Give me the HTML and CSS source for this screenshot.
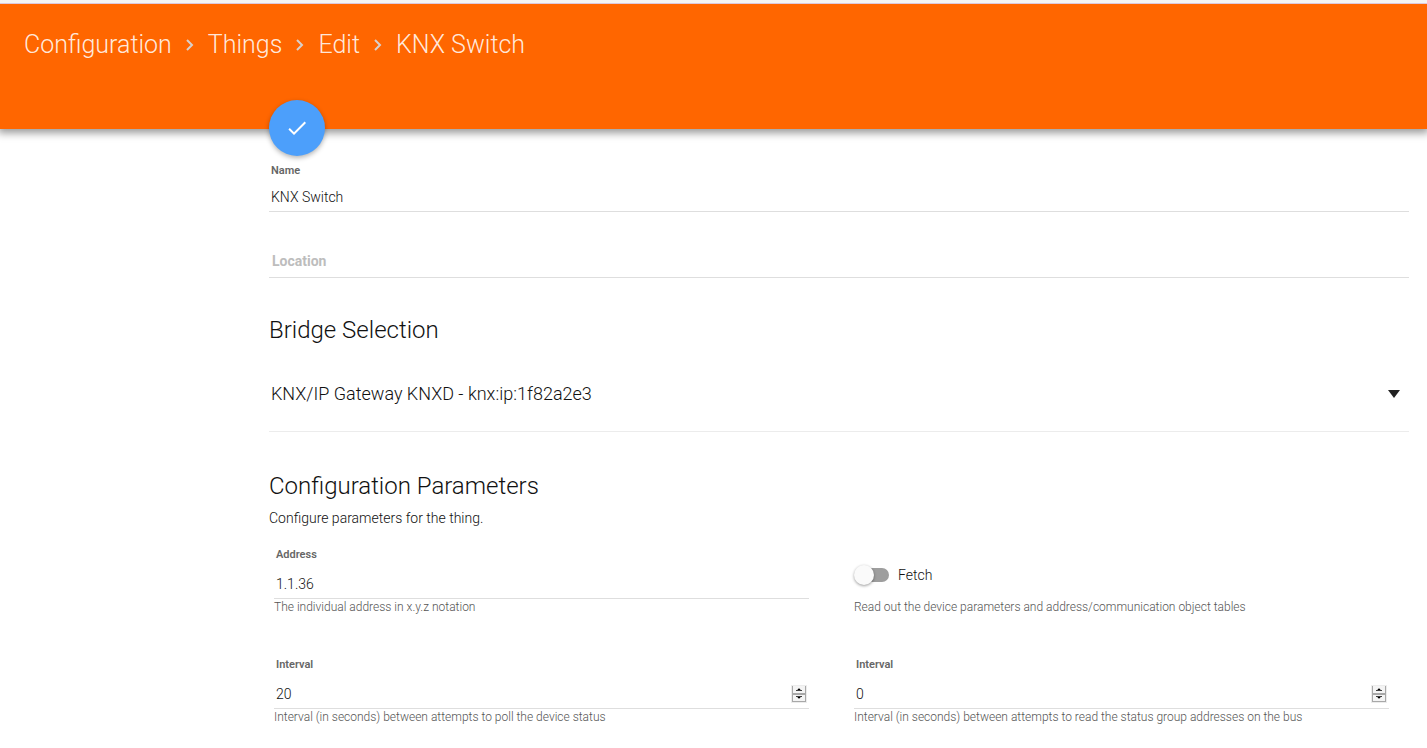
FILE: index.html
```
<!DOCTYPE html>
<html lang="en">
<head>
    <meta charset="UTF-8">
    <meta name="viewport" content="width=device-width, initial-scale=1.0">
    <title>Configuration - Things - Edit</title>
    <link rel="stylesheet" href="styles.css">
</head>
<body>
    <header class="toolbar">
        <nav class="breadcrumb">
            <a href="#configuration">Configuration</a>
            <svg viewBox="0 0 8 12"><path d="M1 1l5 5-5 5"/></svg>
            <a href="#things">Things</a>
            <svg viewBox="0 0 8 12"><path d="M1 1l5 5-5 5"/></svg>
            <a href="#edit">Edit</a>
            <svg viewBox="0 0 8 12"><path d="M1 1l5 5-5 5"/></svg>
            <a href="#knx-switch">KNX Switch</a>
        </nav>
        <button class="fab" type="submit" form="thing-form" aria-label="Save">
            <svg viewBox="0 0 24 24"><path d="M9 16.17L4.83 12l-1.42 1.41L9 19 21 7l-1.41-1.41z"/></svg>
        </button>
    </header>

    <form class="content" id="thing-form">
        <div class="field">
            <label for="name">Name</label>
            <input type="text" id="name" value="KNX Switch">
        </div>
        <div class="field field-empty">
            <input type="text" id="location" placeholder="Location" aria-label="Location">
        </div>

        <h2>Bridge Selection</h2>
        <div class="select-wrap">
            <select aria-label="Bridge Selection">
                <option>KNX/IP Gateway KNXD - knx:ip:1f82a2e3</option>
            </select>
            <span class="caret"></span>
        </div>

        <h2>Configuration Parameters</h2>
        <p class="intro">Configure parameters for the thing.</p>

        <div class="params">
            <div class="field param">
                <label for="address">Address</label>
                <input type="text" id="address" value="1.1.36">
                <p class="hint">The individual address in x.y.z notation</p>
            </div>
            <div class="param">
                <label class="switch">
                    <input type="checkbox">
                    <span>Fetch</span>
                </label>
                <p class="hint">Read out the device parameters and address/communication object tables</p>
            </div>
            <div class="field param">
                <label for="poll">Interval</label>
                <div class="number">
                    <input type="number" id="poll" value="20">
                    <div class="spinner">
                        <button type="button" aria-label="Increase"><svg viewBox="0 0 7 3"><path d="M3 0h1v1h1v1h2v1H0V2h2V1h1z"/></svg></button>
                        <button type="button" aria-label="Decrease"><svg viewBox="0 0 7 3"><path d="M0 0h7v1H5v1H4v1H3V2H2V1H0z"/></svg></button>
                    </div>
                </div>
                <p class="hint">Interval (in seconds) between attempts to poll the device status</p>
            </div>
            <div class="field param">
                <label for="read">Interval</label>
                <div class="number">
                    <input type="number" id="read" value="0">
                    <div class="spinner">
                        <button type="button" aria-label="Increase"><svg viewBox="0 0 7 3"><path d="M3 0h1v1h1v1h2v1H0V2h2V1h1z"/></svg></button>
                        <button type="button" aria-label="Decrease"><svg viewBox="0 0 7 3"><path d="M0 0h7v1H5v1H4v1H3V2H2V1H0z"/></svg></button>
                    </div>
                </div>
                <p class="hint">Interval (in seconds) between attempts to read the status group addresses on the bus</p>
            </div>
        </div>
    </form>
</body>
</html>
```
FILE: styles.css
```
* { box-sizing: border-box; }

body {
    margin: 0;
    background-color: #fff;
    border-top: 3px solid #f4f4f4;
    color: #111;
    font-family: Roboto, "Liberation Sans", sans-serif;
    font-size: 14px;
    font-weight: 300;
}

h2, p { margin: 0; }

input, select, button {
    font: inherit;
    color: inherit;
}

/* Toolbar */
.toolbar {
    position: relative;
    height: 126px;
    padding: 25px 24px 0;
    background-color: #ff6600;
    border-top: 1px solid #dcc8dc;
    box-shadow: 0 2px 8px 2px rgba(0, 0, 0, 0.4);
}

.breadcrumb {
    display: flex;
    align-items: center;
    line-height: 32px;
    font-size: 25px;
}

.breadcrumb a {
    color: rgba(255, 255, 255, 0.87);
    text-decoration: none;
}

.breadcrumb svg {
    width: 8px;
    height: 12px;
    margin: 0 14px;
    fill: none;
    stroke: #d8d0cc;
    stroke-width: 2;
}

.fab {
    position: absolute;
    left: 269px;
    bottom: -27px;
    width: 56px;
    height: 56px;
    padding: 16px;
    border: 0;
    border-radius: 50%;
    background-color: #4c9ffb;
    box-shadow: 0 2px 5px rgba(0, 0, 0, 0.3);
    cursor: pointer;
}

.fab svg {
    display: block;
    width: 24px;
    height: 24px;
    fill: #fff;
}

/* Form */
.content {
    margin: 0 18px 0 269px;
    padding-top: 34px;
}

.field > label {
    display: block;
    padding-left: 2px;
    color: #666;
    font-size: 11px;
    font-weight: 600;
    line-height: 16px;
}

.field input {
    display: block;
    width: 100%;
    height: 33px;
    padding: 4px 2px 0;
    border: 0;
    border-bottom: 1px solid #dedede;
    border-radius: 0;
    background: none;
    outline: 0;
}

.field-empty { margin-top: 33px; }
.field-empty input { padding: 0 3px; }

.field-empty input::placeholder {
    color: #bdbdbd;
    font-weight: 700;
    opacity: 1;
}

h2 {
    margin-top: 36px;
    font-size: 24px;
    font-weight: 300;
    line-height: 32px;
}

.select-wrap {
    position: relative;
    margin: 10px 0 38px;
}

.select-wrap select {
    display: block;
    width: 100%;
    height: 76px;
    padding: 0 2px;
    border: 0;
    border-bottom: 1px solid #ececec;
    border-radius: 0;
    background: none;
    font-size: 18px;
    appearance: none;
}

.caret {
    position: absolute;
    top: 34px;
    right: 9px;
    border: 6px solid transparent;
    border-top: 8px solid #212121;
    border-bottom: 0;
    pointer-events: none;
}

.intro {
    margin-top: 6px;
    line-height: 20px;
}

/* Parameters */
.params {
    display: grid;
    grid-template-columns: 1fr 1fr;
    gap: 42px 45px;
    margin-top: 19px;
    padding: 0 20px 20px 5px;
}

.param input {
    height: 36px;
    padding-top: 7px;
}

.hint {
    color: #555;
    font-size: 12px;
    line-height: 16px;
}

.number { position: relative; }
.number input { appearance: textfield; }

.number input::-webkit-inner-spin-button { appearance: none; }

.spinner {
    position: absolute;
    right: 2px;
    bottom: 6px;
    display: flex;
    flex-direction: column;
    width: 16px;
    height: 18px;
    border: 1px solid #ececec;
}

.spinner button {
    display: flex;
    flex: 1;
    align-items: center;
    justify-content: center;
    min-height: 0;
    padding: 0;
    border: 1px solid #a8a8a8;
    border-top: 0;
    background-color: #f4f4f4;
}

.spinner button:first-child { border-bottom-width: 2px; }

.spinner svg {
    width: 6px;
    height: 3px;
    fill: #000;
}

.switch {
    display: flex;
    align-items: center;
    gap: 9px;
    height: 52px;
    padding-top: 3px;
}

.switch input {
    position: relative;
    width: 34px;
    height: 14px;
    margin: 1px 0 0 1px;
    padding: 0;
    border-radius: 7px;
    background-color: #9e9e9e;
    appearance: none;
}

.switch input::before {
    content: "";
    position: absolute;
    top: -3px;
    left: -1px;
    width: 20px;
    height: 20px;
    border-radius: 50%;
    background-color: #fafafa;
    box-shadow: 0 1px 3px rgba(0, 0, 0, 0.4);
}

.switch input:checked::before { left: 15px; }
```
